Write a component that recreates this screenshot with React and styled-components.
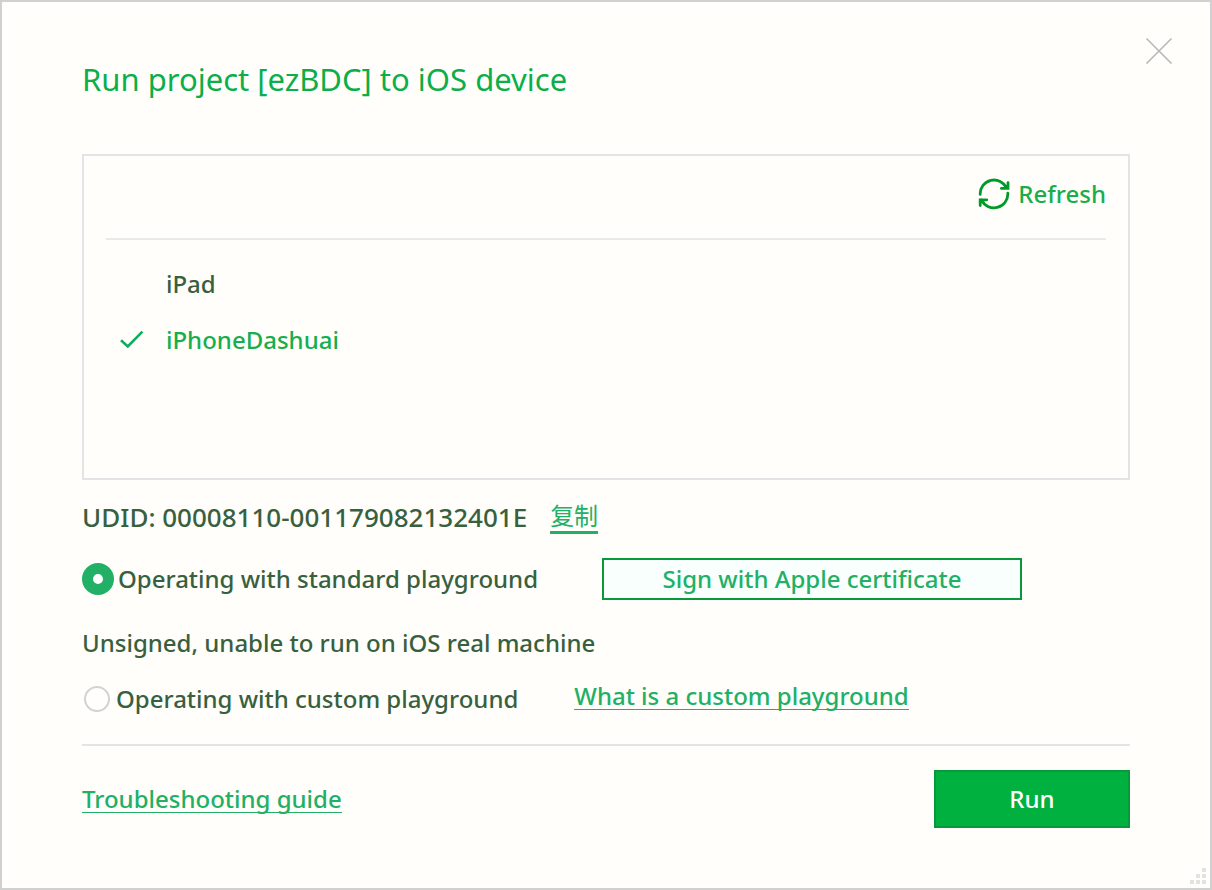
import React, { useState } from "react";
import styled, { createGlobalStyle } from "styled-components";

const GlobalStyle = createGlobalStyle`
  *, *::before, *::after { box-sizing: border-box; }
  body { margin: 0; background: #fffefa; }
  button, input { font: inherit; }
`;

const Dialog = styled.main`
  position: relative;
  display: flex;
  flex-direction: column;
  min-height: 100vh;
  padding: 57px 80px 60px;
  border: 2px solid #d0d0d0;
  background: #fffefa;
  color: #38603f;
  font: 500 24px/32px "Noto Sans", "Noto Sans CJK SC", sans-serif;
`;

const Title = styled.h1`
  margin: 0 0 55px;
  color: #0cae4a;
  font-size: 31px;
  font-weight: 400;
  line-height: 40px;
`;

const CloseButton = styled.button`
  position: absolute;
  top: 34px;
  right: 37px;
  display: flex;
  padding: 0;
  border: 0;
  background: none;
  color: #b8b8b8;
  cursor: pointer;
`;

const DevicePanel = styled.section`
  min-height: 326px;
  padding: 0 22px;
  border: 2px solid #e4e4e6;
`;

const PanelHeader = styled.header`
  display: flex;
  justify-content: flex-end;
  padding: 22px 0 28px;
  border-bottom: 2px solid #e9e9e9;
`;

const RefreshButton = styled.button`
  display: flex;
  align-items: center;
  gap: 8px;
  padding: 0;
  border: 0;
  background: none;
  color: #16ae4e;
  cursor: pointer;
`;

const DeviceList = styled.div`
  display: flex;
  flex-direction: column;
  padding-top: 16px;
`;

const DeviceRow = styled.button`
  display: grid;
  grid-template-columns: 48px 1fr;
  align-items: center;
  height: 56px;
  padding: 0 12px;
  border: 0;
  background: none;
  color: ${(p) => (p.$selected ? "#16ae4e" : "#38603f")};
  text-align: left;
  cursor: pointer;
`;

const UdidRow = styled.div`
  display: flex;
  align-items: flex-start;
  gap: 23px;
  padding-top: 21px;
`;

const Udid = styled.span`
  font-size: 26px;
`;

const CopyButton = styled.button`
  padding: 0 0 1px;
  border: 0;
  border-bottom: 3px solid #21b066;
  background: none;
  color: #21b066;
  font-weight: 400;
  line-height: 29px;
  cursor: pointer;
`;

const OptionRow = styled.div`
  display: flex;
  align-items: ${(p) => p.$align};
  gap: ${(p) => p.$gap}px;
  margin-top: 24px;
`;

const OptionLabel = styled.label`
  display: flex;
  align-items: center;
  gap: ${(p) => (p.$selected ? 4 : 6)}px;
  padding-left: ${(p) => (p.$selected ? 0 : 2)}px;
  cursor: pointer;
`;

const Radio = styled.input`
  appearance: none;
  flex: none;
  width: 26px;
  height: 26px;
  margin: 0;
  border: 2px solid #d2d2d2;
  border-radius: 50%;
  background: transparent;

  &:checked {
    width: 32px;
    height: 32px;
    border: 11px solid #21b066;
    background: #fff;
  }
`;

const SignButton = styled.button`
  width: 420px;
  height: 42px;
  padding: 0;
  border: 2px solid #07993c;
  background: #f9fffc;
  color: #21b066;
  line-height: 36px;
  cursor: pointer;
`;

const Notice = styled.p`
  margin: 27px 0 0;
`;

const TextLink = styled.a`
  border-bottom: 1px solid #21b066;
  color: #21b066;
  line-height: 26px;
  text-decoration: none;
`;

const Footer = styled.footer`
  display: flex;
  align-items: center;
  justify-content: space-between;
  margin-top: 29px;
  padding-top: 24px;
  border-top: 2px solid #e4e4e6;
`;

const RunButton = styled.button`
  width: 196px;
  height: 58px;
  padding: 0;
  border: 2px solid #07993c;
  background: #00b140;
  color: #fff;
  cursor: pointer;
`;

const Grip = styled.svg`
  position: absolute;
  right: 4px;
  bottom: 4px;
`;

function CloseIcon() {
  return (
    <svg width="28" height="28" viewBox="0 0 28 28" fill="none" stroke="currentColor" strokeWidth="1.6" aria-hidden="true">
      <path d="M1.5 2.5l25 25M26.5 2.5l-25 25" />
    </svg>
  );
}

function RefreshIcon() {
  return (
    <svg width="32" height="32" viewBox="0 0 32 32" fill="none" stroke="#009a2b" strokeWidth="2.8" strokeLinecap="round" aria-hidden="true">
      <path d="M2.2 16.4A13.8 13.8 0 0 1 28.6 10.2M30 4.6v5.8h-6.6" />
      <path d="M29.8 15.2A13.8 13.8 0 0 1 3.4 21.6M2.2 27.6v-5.8h6.6" />
    </svg>
  );
}

function CheckIcon() {
  return (
    <svg width="26" height="22" viewBox="0 0 26 22" fill="none" stroke="#0cae5e" strokeWidth="2.6" aria-hidden="true">
      <path d="M3 13.2l6.8 6.2L24.4 4.6" />
    </svg>
  );
}

const devices = ["iPad", "iPhoneDashuai"];

export default function App() {
  const [device, setDevice] = useState("iPhoneDashuai");
  const [mode, setMode] = useState("standard");

  return (
    <>
      <GlobalStyle />
      <Dialog>
        <Title>Run project [ezBDC] to iOS device</Title>
        <CloseButton type="button" aria-label="Close">
          <CloseIcon />
        </CloseButton>
        <DevicePanel>
          <PanelHeader>
            <RefreshButton type="button">
              <RefreshIcon />
              Refresh
            </RefreshButton>
          </PanelHeader>
          <DeviceList>
            {devices.map((name) => (
              <DeviceRow
                key={name}
                type="button"
                aria-pressed={device === name}
                $selected={device === name}
                onClick={() => setDevice(name)}
              >
                <span>{device === name && <CheckIcon />}</span>
                {name}
              </DeviceRow>
            ))}
          </DeviceList>
        </DevicePanel>
        <UdidRow>
          <Udid>UDID: 00008110-001179082132401E</Udid>
          <CopyButton type="button">复制</CopyButton>
        </UdidRow>
        <OptionRow $gap={64} $align="center">
          <OptionLabel $selected={mode === "standard"}>
            <Radio type="radio" name="playground" checked={mode === "standard"} onChange={() => setMode("standard")} />
            Operating with standard playground
          </OptionLabel>
          <SignButton type="button">Sign with Apple certificate</SignButton>
        </OptionRow>
        <Notice>Unsigned, unable to run on iOS real machine</Notice>
        <OptionRow $gap={56} $align="flex-start">
          <OptionLabel $selected={mode === "custom"}>
            <Radio type="radio" name="playground" checked={mode === "custom"} onChange={() => setMode("custom")} />
            Operating with custom playground
          </OptionLabel>
          <TextLink href="#custom-playground">What is a custom playground</TextLink>
        </OptionRow>
        <Footer>
          <TextLink href="#troubleshooting">Troubleshooting guide</TextLink>
          <RunButton type="button">Run</RunButton>
        </Footer>
        <Grip width="16" height="16" viewBox="0 0 16 16" fill="#e2e2e4" aria-hidden="true">
          <path d="M12 0h4v4h-4zM6 6h4v4H6zM12 6h4v4h-4zM0 12h4v4H0zM6 12h4v4H6zM12 12h4v4h-4z" />
        </Grip>
      </Dialog>
    </>
  );
}
